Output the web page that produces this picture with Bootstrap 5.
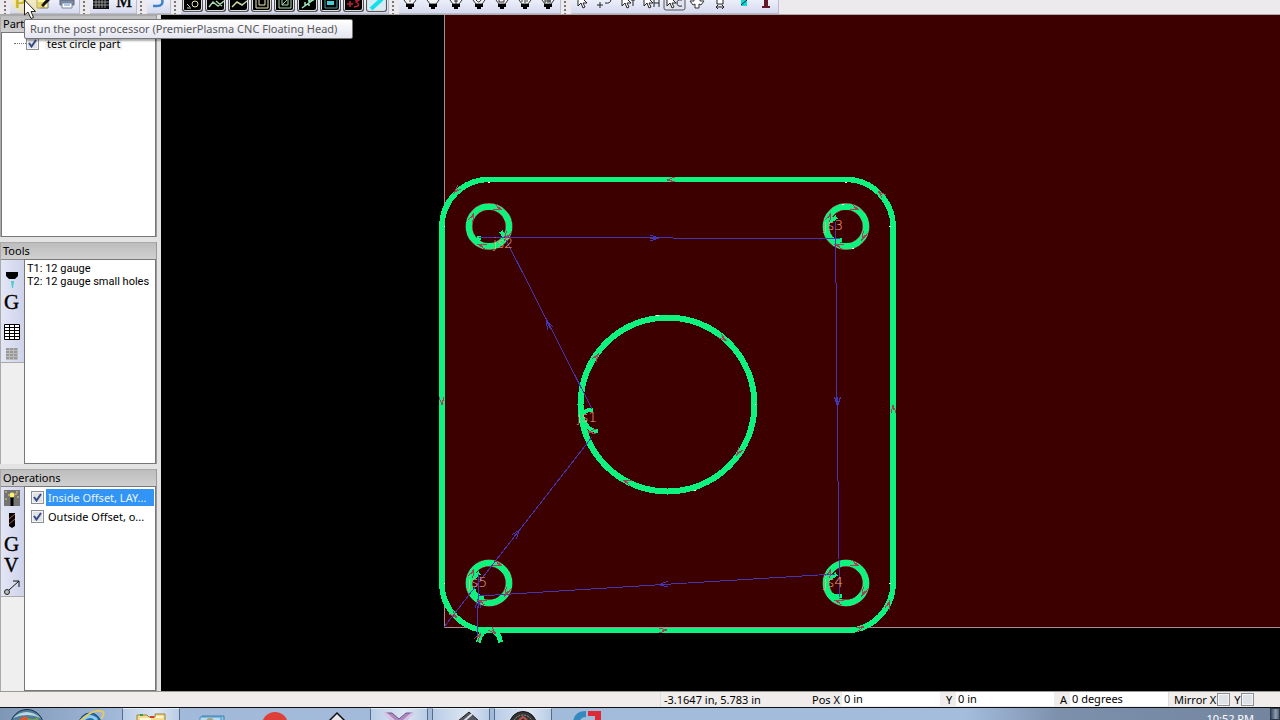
<!DOCTYPE html>
<html lang="en">
<head>
<meta charset="utf-8">
<meta name="viewport" content="width=device-width, initial-scale=1">
<title>CNC job editor</title>
<link href="https://cdn.jsdelivr.net/npm/bootstrap@5.3.0/dist/css/bootstrap.min.css" rel="stylesheet">
<script src="https://cdn.jsdelivr.net/npm/bootstrap@5.3.0/dist/js/bootstrap.bundle.min.js"></script>
<style>
body{font:11px/13px "Noto Sans","DejaVu Sans",sans-serif;color:#000;background:#e9e8e8;}
button{appearance:none;border:0;background:none;padding:0;color:#000;}
svg{display:block;}
.toolstrip{height:15px;background:#eceaec;border-bottom:1px solid #aaa;}
.grip{width:11px;background:radial-gradient(circle,#777 1px,transparent 1px) 3px 0/4px 4px repeat-y;}
.grip-first{width:10px;}
.toolset{height:13px;background:linear-gradient(#eceefa,#d6daee);border-right:1px solid #bbc;border-bottom:1px solid #b8bccd;box-sizing:content-box;margin-right:-1px;}
.toolset button{width:23px;height:12px;}
.toolset svg{width:23px;height:12px;}
.dark-key{background:#000;border:1px solid #555;border-top:0;border-radius:0 0 3px 3px;box-shadow:inset 1px 0 #ddd,inset -1px -1px #ddd;width:21px;height:12px;margin:0 auto;overflow:hidden;}
.side{width:161px;background:#e4e3e3;padding:0 4px 0 0;gap:5px;}
.panel{flex:1 1 0;border-right:1px solid #999;border-left:1px solid #aaa;background:#efefef;min-height:0;}
.panel-title{height:17px;line-height:15px;padding-left:2px;background:linear-gradient(#bdbdbd,#d0d0d0);border-top:1px solid #aaa;font-size:11px;font-weight:400;}
.listbox{background:#fff;border:1px solid #777;}
.strip{width:23px;border-top:1px solid #888;}
.strip-keys{background:linear-gradient(90deg,#e3e6f6,#cfd3ea);border-bottom:1px solid #aaa;}
.strip-keys button,.strip-keys svg{width:23px;}
.tick{appearance:none;width:13px;height:13px;margin:0;border:1px solid #8b8f94;box-shadow:inset 0 0 0 1px #f4f4f4;background:#dfe2e6;flex:none;}
.tick:checked{background:#dfe2e6 url("data:image/svg+xml,%3Csvg xmlns='http://www.w3.org/2000/svg' viewBox='0 0 11 11'%3E%3Cpath d='M2 5l2.500 3.500L9 2' fill='none' stroke='%23364a87' stroke-width='2'/%3E%3C/svg%3E") center/11px;}
.dots{width:12px;border-top:1px dotted #777;}
.tree-row{padding:4px 0 0 12px;}
.tree-row label{background:#f2f2f2;margin-left:6px;padding:0 2px;}
.ops{padding:1px 1px 0 6px;}
.ops-row{height:19px;gap:2px;}
.ops-row label{height:17px;line-height:17px;padding-left:2px;}
.picked{background:#3294f5;color:#e8f4ff;}
.tools-list{padding:2px;font-family:Roboto,sans-serif;}
.scene{background:#000;min-width:0;}
.status{height:16px;background:#efeceb;border-top:1px solid #999;line-height:15px;}
.readout{width:152px;padding-left:3px;border-left:1px solid #ddd;}
.field{border:0;background:#fff;padding:0 0 0 2px;width:98px;height:14px;font:inherit;line-height:14px;color:#000;min-width:0;border-radius:0;}
.cell-label{width:30px;}
.cell-short{width:16px;padding-left:6px;}
.mirror{width:112px;padding-left:5px;border-left:1px solid #ddd;gap:1px;}
.mirror-y{margin-left:3px;}
.taskbar{height:13px;border-top:1px solid #111;background:linear-gradient(90deg,#7f97b7 0,#a2b9d9 120px,#a4bddd 965px,#7c90ac 1060px,#73859e 100%);gap:4px;}
.taskbar button{width:58px;height:12px;flex:none;}
.taskbar .orb{width:56px;}
.taskbar .open-app{background:linear-gradient(90deg,#b9cce6,#dce6f3 60%,#b9cce5);border:1px solid #566d8a;border-top-color:#dfeaf7;border-bottom:0;}
.taskbar svg{width:58px;height:12px;}
.clock{color:#fff;margin-right:12px;line-height:22px;height:12px;}
.taskbar .peek{width:10px;background:linear-gradient(90deg,#38495e,#8fa0b5 60%,#536377);border:1px solid #2e3a4b;}
.hint{top:19px;left:24px;height:20px;border:1px solid #767676;border-radius:2px;background:linear-gradient(#fff,#e4e5f0);color:#575757;line-height:18px;padding:0 8px 0 5px;min-width:329px;box-shadow:2px 2px 2px #0005;z-index:5;}
.pointer{left:23px;top:0;z-index:6;}
.glow{left:10px;top:0;width:34px;height:15px;background:radial-gradient(ellipse at 50% 0,#ffe76a60 60%,#ffe76a00 72%);z-index:4;pointer-events:none;}
</style>
</head>
<body class="vh-100 d-flex flex-column overflow-hidden position-relative">
<svg width="0" height="0" class="position-absolute" aria-hidden="true">
<defs>
<g id="torch"><path d="M-6-5V0L-3 4H3L6 0V-5" fill="#f4f4f8" stroke="#333"/><path d="M-4 4H4V7H2V9H-2V7H-4Z" fill="#000"/></g>
<path id="arrowcur" d="M-4-4V6L-1 3 1 8 3 7 1 3H5L-3-5" fill="#fff" stroke="#222"/>
<path id="mark" d="M4-3L-4 0L4 2M-4 0H1" fill="none" stroke="#a5405a" stroke-width="1"/>
<path id="flow" d="M-5-3L4 0L-5 3M-5 0H4" fill="none" stroke="#4336b0" stroke-width="1"/>
</defs>
</svg>

<header class="toolstrip d-flex flex-shrink-0 overflow-hidden">
<span class="grip grip-first"></span>
<div class="toolset d-flex">
<button aria-label="Post process"><svg><text x="5" y="8" font-family="Liberation Sans" font-weight="bold" font-size="17" fill="#a89800">P</text></svg></button>
<button aria-label="Edit notes"><svg><path d="M4-2H15V8H4Z" fill="#fff8b0" stroke="#777"/><path d="M5 3H12M5 5H10M5 7H12" stroke="#b29b1c"/><path d="M16-1L9 6" stroke="#111" stroke-width="3"/></svg></button>
<button aria-label="Print"><svg><path d="M4 0H18V5H4Z" fill="#7c8aa3" stroke="#59677c"/><path d="M6 3H16V8H6Z" fill="#fff" stroke="#7485a0"/><path d="M8 5H14" stroke="#5b91c8"/></svg></button>
</div><span class="grip"></span>
<div class="toolset d-flex">
<button aria-label="Grid"><svg><path d="M3-1H19V9H3Z" fill="#111"/><path d="M6 0V8M9 0V8M12 0V8M15 0V8M3 2H19M3 5H19" stroke="#bbb" stroke-width=".7"/></svg></button>
<button aria-label="Machine"><svg><text x="3" y="7" font-family="Liberation Serif" font-size="18" stroke="#000" stroke-width=".4">M</text></svg></button>
</div><span class="grip"></span>
<div class="toolset d-flex">
<button aria-label="Undo"><svg><path d="M15-1Q17 6 10 6H6" fill="none" stroke="#3d83cb" stroke-width="2.500"/></svg></button>
</div><span class="grip"></span>
<div class="toolset d-flex">
<button aria-label="Show points"><div class="dark-key"><svg><path d="M4 8H8M4 4L7 7" stroke="#ccc"/><circle cx="12" cy="4" r="3" fill="none" stroke="#e9e79a"/></svg></div></button>
<button aria-label="Show path"><div class="dark-key"><svg><path d="M3 7L7 2L12 6L18 1M10 1L16 6" fill="none" stroke="#a6d6a8" stroke-width="1.500"/></svg></div></button>
<button aria-label="Show curve"><div class="dark-key"><svg><path d="M3 7L8 2L13 5L18 1" fill="none" stroke="#c8dc9f" stroke-width="1.500"/></svg></div></button>
<button aria-label="Show part"><div class="dark-key"><svg><path d="M4-2H16V8H4ZM7-2H13V5H7Z" fill="none" stroke="#eee9b0"/></svg></div></button>
<button aria-label="Show cut"><div class="dark-key"><svg><path d="M4-2H16V8H4ZM7-2H13V5H7ZM7 5L14-2" fill="none" stroke="#a2dcaa"/></svg></div></button>
<button aria-label="Show rapids"><div class="dark-key"><svg><path d="M4 8L15 0M10 0H16M11 0V6M7 2V6" fill="none" stroke="#9ae3bd" stroke-width="1.500"/></svg></div></button>
<button aria-label="Show stock"><div class="dark-key"><svg><path d="M4-1H16V8H4Z" fill="none" stroke="#4b99a0"/><path d="M6 1H13V5H6Z" fill="#43cdd6"/></svg></div></button>
<button aria-label="Show order"><div class="dark-key"><svg><path d="M3 4H9M6 1V7M11 0H15L12 2Q18 6 10 7" fill="none" stroke="#c2202f" stroke-width="1.500"/></svg></div></button>
<button aria-label="Show kerf"><div class="dark-key" style="background:#d5ecf4"><svg><path d="M4 9L15-1" stroke="#17dfe8" stroke-width="4"/></svg></div></button>
</div><span class="grip"></span>
<div class="toolset d-flex">
<button aria-label="Torch start"><svg><use href="#torch" x="11"/><path d="M11-2V2" stroke="#555"/></svg></button>
<button aria-label="Torch"><svg><use href="#torch" x="11"/></svg></button>
<button aria-label="Torch down"><svg><use href="#torch" x="11"/><path d="M11-2V4M9 1H13" stroke="#333"/></svg></button>
<button aria-label="Torch loop"><svg><use href="#torch" x="11"/><path d="M8 0Q11 4 13 0" fill="none" stroke="#333"/></svg></button>
<button aria-label="Torch pocket"><svg><use href="#torch" x="11"/><path d="M8-2H13V2H8Z" fill="none" stroke="#333"/></svg></button>
<button aria-label="Torch marks"><svg><use href="#torch" x="11"/><path d="M8-1V2M11-1V3M13-1V2" stroke="#333"/></svg></button>
<button aria-label="Torch text"><svg><use href="#torch" x="11"/><path d="M8-1V3M11-1V3M13-1V3M8 1H14" stroke="#333"/></svg></button>
</div><span class="grip"></span>
<div class="toolset d-flex">
<button aria-label="Select"><svg><use href="#arrowcur" x="11"/></svg></button>
<button aria-label="Edit start points"><svg><path d="M3 5H9M6 2V8M11 3Q17 4 17-1" fill="none" stroke="#222"/></svg></button>
<button aria-label="Select tool path"><svg><use href="#arrowcur" x="9"/><path d="M14 0H18M16 0V6" stroke="#222"/></svg></button>
<button aria-label="Select holes"><svg><use href="#arrowcur" x="8"/><path d="M14-1V7M19-1V7M14 3H19" stroke="#222"/></svg></button>
<button aria-label="Select contours"><svg><rect x="1" y="-5" width="21" height="15" rx="2" fill="#dfe2ef" stroke="#555"/><use href="#arrowcur" x="8"/><path d="M19 0Q14-1 14 3T19 6" fill="none" stroke="#222"/></svg></button>
<button aria-label="Move"><svg><path d="M8-2V1H4L7 5L9 4V8H13V4L15 5L18 1H14V-2" fill="#fff" stroke="#333"/></svg></button>
<button aria-label="Measure"><svg><path d="M8-2V4H14V-2" fill="#fff" stroke="#222"/><path d="M7 7H15M9 5L7 7L9 9M13 5L15 7L13 9" fill="none" stroke="#222"/></svg></button>
<button aria-label="Simulate"><svg><path d="M9-1H15V6H9Z" fill="#13d5dc"/><path d="M9 5L15 0" stroke="#222"/></svg></button>
<button aria-label="Text"><svg><path d="M9-2H13V6H15V8H7V6H9Z" fill="#621827"/></svg></button>
</div>
</header>

<main class="d-flex flex-grow-1 overflow-hidden">
<aside class="side d-flex flex-column flex-shrink-0">
<section class="panel d-flex flex-column">
<h2 class="panel-title m-0">Parts</h2>
<div class="listbox flex-grow-1"><div class="tree-row d-flex align-items-center"><span class="dots"></span><input class="tick" type="checkbox" id="part" checked><label for="part">test circle part</label></div></div>
</section>
<section class="panel d-flex flex-column">
<h2 class="panel-title m-0">Tools</h2>
<div class="d-flex flex-grow-1"><div class="strip"><div class="strip-keys d-flex flex-column">
<button aria-label="Plasma tool"><svg height="30"><path d="M5 12H17V16L14 19H8L5 16Z"/><path d="M10 21H13L12 28H11Z" fill="#43cdd1"/></svg></button>
<button aria-label="G code"><svg height="27"><text x="3" y="19" font-family="Liberation Serif" font-size="21" stroke="#000" stroke-width=".4">G</text></svg></button>
<button aria-label="Tool table"><svg height="27"><path d="M3.500 7.500H18.500V22.500H3.500Z" fill="#fff" stroke="#000"/><path d="M3 10.500H19M3 13.500H19M3 16.500H19M3 19.500H19M8.500 7V23M13.500 7V23" stroke="#000"/></svg></button>
<button aria-label="Tool list"><svg height="18"><path d="M5 4H17V16H5Z" fill="#bbb"/><path d="M5 5H17M5 8H17M5 11H17M5 14H17" stroke="#777" stroke-dasharray="3 1"/></svg></button>
</div></div>
<div class="listbox tools-list flex-grow-1 text-nowrap"><div>T1: 12 gauge</div><div>T2: 12 gauge small holes</div></div></div>
</section>
<section class="panel d-flex flex-column">
<h2 class="panel-title m-0">Operations</h2>
<div class="d-flex flex-grow-1"><div class="strip"><div class="strip-keys d-flex flex-column">
<button aria-label="New operation"><svg height="22"><path d="M3 3H19V19H3Z" fill="#747474"/><path d="M11 9V19" stroke="#000" stroke-width="3"/><circle cx="11" cy="8" r="2.500" fill="#ffee72"/><path d="M5 4V6M16 4V6M5 11V13M17 9V11M7 8H8M14 7H16" stroke="#ead970"/></svg></button>
<button aria-label="Drill"><svg height="22"><path d="M8 4H14V17L11 19L8 17Z"/><path d="M8 10L14 5M8 15L14 10" stroke="#c5544b"/></svg></button>
<button aria-label="G code"><svg height="23"><text x="3" y="20" font-family="Liberation Serif" font-size="21" stroke="#000" stroke-width=".4">G</text></svg></button>
<button aria-label="Variables"><svg height="21"><text x="3" y="18" font-family="Liberation Serif" font-size="20" stroke="#000" stroke-width=".4">V</text></svg></button>
<button aria-label="Move to"><svg height="21"><circle cx="6" cy="17" r="2.500" fill="#bbb" stroke="#222"/><path d="M8 15L18 6M12 6H18V12" fill="none" stroke="#111"/></svg></button>
</div></div>
<div class="listbox ops flex-grow-1 overflow-hidden">
<div class="ops-row d-flex align-items-center"><input class="tick" id="inside" type="checkbox" checked><label class="picked flex-grow-1 text-nowrap" for="inside">Inside Offset, LAY...</label></div>
<div class="ops-row d-flex align-items-center"><input class="tick" id="outside" type="checkbox" checked><label class="flex-grow-1 text-nowrap" for="outside">Outside Offset, o...</label></div>
</div></div>
</section>
</aside>

<div class="scene flex-grow-1 overflow-hidden">
<svg class="w-100 h-100" viewBox="161 15 1119 676" preserveAspectRatio="xMinYMin slice" role="img" aria-label="Tool path drawing">
<rect x="444" y="0" width="1900" height="627" fill="#3c0000"/>
<path d="M444.500 0V627.500H2400" fill="none" stroke="#a78d8d"/>
<g fill="none" stroke="#a56a55" stroke-width="7"><circle cx="489" cy="226.500" r="20"/><circle cx="846" cy="226.500" r="20"/><circle cx="489" cy="583" r="20"/><circle cx="846" cy="583" r="20"/></g>
<g fill="none" stroke="#0df37e" stroke-width="5" stroke-linecap="square" shape-rendering="crispEdges">
<path d="M489 179.500H846A47 47 0 0 1 893 227V583A47 47 0 0 1 846 630.500H489A47 47 0 0 1 442 583V227A47 47 0 0 1 489 179.500Z" stroke-width="5.500"/>
<circle cx="667.500" cy="404.500" r="87" stroke-width="6"/>
<g stroke-width="6"><circle cx="489" cy="226.500" r="20"/><circle cx="846" cy="226.500" r="20"/><circle cx="489" cy="583" r="20"/><circle cx="846" cy="583" r="20"/></g>
<path d="M479 640Q480 632 489 629Q499 632 500 640"/>
<path d="M583 413Q586 410 591 410M585 422Q588 430 596 431M479 238L478 242M502 233L505 238M829 222L835 218M829 236Q833 241 840 240M472 579L478 574M474 591Q476 597 482 597M829 579L835 575M829 592Q833 597 840 596" stroke-width="4"/>
</g>
<g shape-rendering="crispEdges">
<g fill="none" stroke="#4336b0" stroke-width="1"><path d="M444 627L592 437M592 409L504 236M479 238L504 237L840 239M835.500 222L837 402L839.500 597M835 574L663 584.500L479 596M478.500 574L477.500 638"/></g>
<use href="#flow" transform="translate(655 238)"/><use href="#flow" transform="translate(548 324) rotate(-117)"/><use href="#flow" transform="translate(517 533) rotate(-52)"/><use href="#flow" transform="translate(837.500 402) rotate(90)"/><use href="#flow" transform="translate(663 584.500) rotate(176)"/><use href="#flow" transform="translate(478 603) rotate(-90)"/>
<use href="#mark" x="671" y="180"/><use href="#mark" transform="translate(663 630) rotate(180)"/><use href="#mark" transform="translate(442 401) rotate(-90)"/><use href="#mark" transform="translate(893 409) rotate(90)"/>
<use href="#mark" transform="translate(457 190) rotate(-43)"/><use href="#mark" transform="translate(881 194) rotate(45)"/><use href="#mark" transform="translate(454 615) rotate(225)"/><use href="#mark" transform="translate(888 605) rotate(110)"/><use href="#mark" transform="translate(860 628) rotate(165)"/>
<use href="#mark" transform="translate(596 357) rotate(128)"/><use href="#mark" transform="translate(723 338) rotate(220)"/><use href="#mark" transform="translate(739 452) rotate(-55)"/><use href="#mark" transform="translate(627 482) rotate(24)"/>
<g id="hole-marks"><use href="#mark" transform="translate(498 208) rotate(205)"/><use href="#mark" transform="translate(472 217) rotate(118)"/><use href="#mark" transform="translate(507 236) rotate(-60)"/><use href="#mark" transform="translate(482 246) rotate(20)"/></g>
<use href="#hole-marks" x="357"/><use href="#hole-marks" y="356"/><use href="#hole-marks" x="357" y="356"/>
<use href="#mark" transform="translate(493 631) rotate(225)"/><use href="#mark" transform="translate(478 637) rotate(130)"/><use href="#mark" transform="translate(592 432)"/>
<path d="M488 182h2M845 182h2M889 226h2M889 583h2M694 490h2M444 226h1M444 583h1M656 315h3M842 204h2M852 248h2M755 404h1" stroke="#fff"/>
</g>
<g font-family="DejaVu Sans" font-weight="200" font-size="14" fill="#f5a37c"><text x="577" y="422">js1</text><text x="493" y="248">js2</text><text x="823" y="230">js3</text><text x="823" y="587">js4</text><text x="467" y="587">js5</text></g>
</svg>
</div>
</main>

<footer class="flex-shrink-0">
<div class="status d-flex text-nowrap">
<span class="flex-grow-1"></span>
<output class="readout">-3.1647 in, 5.783 in</output>
<label class="cell-label" for="px">Pos X</label><input class="field" id="px" value="0 in">
<label class="cell-short" for="py">Y</label><input class="field" id="py" value="0 in">
<label class="cell-short" for="pa">A</label><input class="field" id="pa" value="0 degrees">
<div class="mirror d-flex align-items-center"><label for="mx">Mirror X</label><input class="tick" type="checkbox" id="mx"><label class="mirror-y" for="my">Y</label><input class="tick" type="checkbox" id="my"></div>
</div>
<nav class="taskbar d-flex overflow-hidden" aria-label="Taskbar">
<button class="orb" aria-label="Start"><svg><circle cx="27" cy="18" r="16.500" fill="#517c9b" stroke="#173246"/><path d="M13 10Q26-2 41 10Q27 4 13 10" fill="#b9d8df"/><path d="M19 12Q24 6 28 10V14H19Z" fill="#dc5930"/><path d="M28 10Q34 13 38 9V14H28Z" fill="#70a84b"/></svg></button>
<button aria-label="Browser"><svg><circle cx="30" cy="16" r="11" fill="#246da5" stroke="#154a77"/><path d="M23 12Q30 5 37 12" fill="none" stroke="#8ecbed" stroke-width="3"/><path d="M20 13Q35-1 43 4Q45 6 41 11" fill="none" stroke="#e2c96a" stroke-width="2"/></svg></button>
<button class="open-app" aria-label="Explorer"><svg><path d="M14 12V6H24L26 8H32V5H42V12Z" fill="#f3dc8c" stroke="#9b803b"/><path d="M17 6H20" stroke="#30a042" stroke-width="2"/><path d="M27 8H31" stroke="#cc3f32" stroke-width="2"/><path d="M17 10H28M33 8H40" stroke="#fff8d8" stroke-width="2"/></svg></button>
<button aria-label="Photos"><svg><path d="M18 8H40V14H18Z" fill="#8cc9ed" stroke="#397fae"/><path d="M16 9H37V14H16Z" fill="#b4ddf0" stroke="#4c8dbc"/><circle cx="26" cy="14" r="4" fill="#a9a079"/></svg></button>
<button aria-label="Chrome"><svg><circle cx="29" cy="17" r="13" fill="#dc4038"/></svg></button>
<button aria-label="Drawing"><svg><path d="M29 5L38 14H20Z" fill="#e8e8ee" stroke="#111" stroke-width="1.500"/></svg></button>
<button class="open-app" aria-label="Visual editor"><svg><path d="M14 4H21L28 10L35 4H42L35 12H21Z" fill="#a98bbd" stroke="#74558e"/><path d="M14 4L23 12M42 4L33 12" stroke="#dbc4e8" stroke-width="3"/></svg></button>
<button class="open-app" aria-label="CAD"><svg><path d="M25 12L36 3L46 12Z" fill="#55585e" stroke="#222"/><path d="M31 12L39 5" stroke="#d9dde4" stroke-width="2"/></svg></button>
<button class="open-app" aria-label="CAM"><svg><circle cx="28" cy="16" r="13.500" fill="#343434" stroke="#111"/><circle cx="28" cy="16" r="10" fill="none" stroke="#999" stroke-dasharray="2 1"/><path d="M24 11L28 8L32 11" fill="none" stroke="#bd5145" stroke-width="2"/></svg></button>
<button aria-label="Converter"><svg><path d="M30 3Q18 3 17 14H24Q24 9 30 9Z" fill="#3489bd"/><path d="M32 3H45V12H39V8H32Z" fill="#dc2b36"/></svg></button>
<time class="clock ms-auto">10:52 PM</time><button class="peek" aria-label="Show desktop"></button>
</nav>
</footer>

<div class="glow position-absolute"></div>
<div class="hint position-absolute text-nowrap" role="tooltip">Run the post processor (PremierPlasma CNC Floating Head)</div>
<svg class="pointer position-absolute" width="14" height="20" aria-hidden="true"><path d="M1.500 0V15L5 12L8 18.500L10.500 17.500L8 11.500H12.500Z" fill="#fff" stroke="#222"/></svg>
</body>
</html>
